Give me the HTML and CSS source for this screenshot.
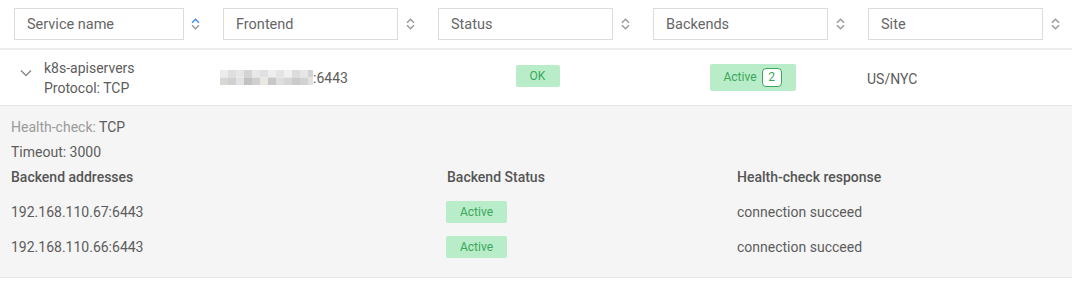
FILE: index.html
```html
<!DOCTYPE html>
<html lang="en">
<head>
    <meta charset="UTF-8">
    <title>Services</title>
    <link rel="stylesheet" href="styles.css">
</head>
<body>
    <div class="services">
        <!-- filter / sort header -->
        <div class="head-row">
            <div class="th first">
                <input class="filter" type="text" placeholder="Service name">
                <svg class="sort" width="9" height="12" viewBox="0 0 9 12"><path d="M1 4.8 L4.5 1.3 L8 4.8" class="up active"/><path d="M1 7.2 L4.5 10.7 L8 7.2"/></svg>
            </div>
            <div class="th">
                <input class="filter" type="text" placeholder="Frontend">
                <svg class="sort" width="9" height="12" viewBox="0 0 9 12"><path d="M1 4.8 L4.5 1.3 L8 4.8"/><path d="M1 7.2 L4.5 10.7 L8 7.2"/></svg>
            </div>
            <div class="th">
                <input class="filter" type="text" placeholder="Status">
                <svg class="sort" width="9" height="12" viewBox="0 0 9 12"><path d="M1 4.8 L4.5 1.3 L8 4.8"/><path d="M1 7.2 L4.5 10.7 L8 7.2"/></svg>
            </div>
            <div class="th">
                <input class="filter" type="text" placeholder="Backends">
                <svg class="sort" width="9" height="12" viewBox="0 0 9 12"><path d="M1 4.8 L4.5 1.3 L8 4.8"/><path d="M1 7.2 L4.5 10.7 L8 7.2"/></svg>
            </div>
            <div class="th">
                <input class="filter" type="text" placeholder="Site">
                <svg class="sort" width="9" height="12" viewBox="0 0 9 12"><path d="M1 4.8 L4.5 1.3 L8 4.8"/><path d="M1 7.2 L4.5 10.7 L8 7.2"/></svg>
            </div>
        </div>

        <!-- service row -->
        <div class="row">
            <div class="td name-cell">
                <svg class="chevron" width="12" height="8" viewBox="0 0 12 8"><path d="M1 1.5 L6 6.5 L11 1.5"/></svg>
                <div class="name">
                    <div>k8s-apiservers</div>
                    <div>Protocol: TCP</div>
                </div>
            </div>
            <div class="td frontend">
                <svg class="blur" width="93" height="15" viewBox="0 0 93 15">
                    <rect x="0" y="0" width="8" height="7.5" fill="#ececec"/>
                    <rect x="8" y="0" width="8" height="7.5" fill="#dedede"/>
                    <rect x="16" y="0" width="8" height="7.5" fill="#e6e6e6"/>
                    <rect x="24" y="0" width="8" height="7.5" fill="#d4d4d4"/>
                    <rect x="32" y="0" width="8" height="7.5" fill="#e8e8e8"/>
                    <rect x="40" y="0" width="8" height="7.5" fill="#e0e0e0"/>
                    <rect x="48" y="0" width="8" height="7.5" fill="#eeeeee"/>
                    <rect x="56" y="0" width="8" height="7.5" fill="#e4e4e4"/>
                    <rect x="64" y="0" width="8" height="7.5" fill="#f0f0f0"/>
                    <rect x="72" y="0" width="8" height="7.5" fill="#dcdcdc"/>
                    <rect x="80" y="0" width="8" height="7.5" fill="#e6e6e6"/>
                    <rect x="88" y="0" width="5" height="7.5" fill="#d2d2d2"/>
                    <rect x="0" y="7.5" width="8" height="7.5" fill="#dad6d2"/>
                    <rect x="8" y="7.5" width="8" height="7.5" fill="#d0d0d0"/>
                    <rect x="16" y="7.5" width="8" height="7.5" fill="#e2e2e2"/>
                    <rect x="24" y="7.5" width="8" height="7.5" fill="#c2c2c2"/>
                    <rect x="32" y="7.5" width="8" height="7.5" fill="#cfcfcf"/>
                    <rect x="40" y="7.5" width="8" height="7.5" fill="#ebe7e3"/>
                    <rect x="48" y="7.5" width="8" height="7.5" fill="#c8c8c8"/>
                    <rect x="56" y="7.5" width="8" height="7.5" fill="#dedede"/>
                    <rect x="64" y="7.5" width="8" height="7.5" fill="#d6d6d6"/>
                    <rect x="72" y="7.5" width="8" height="7.5" fill="#cbcbcb"/>
                    <rect x="80" y="7.5" width="8" height="7.5" fill="#d2d2d2"/>
                    <rect x="88" y="7.5" width="5" height="7.5" fill="#e2e2e2"/>
                </svg>
                <span>:6443</span>
            </div>
            <div class="td center">
                <span class="badge ok">OK</span>
            </div>
            <div class="td center">
                <span class="badge backends">Active <span class="count">2</span></span>
            </div>
            <div class="td site">US/NYC</div>
        </div>

        <!-- expanded details -->
        <div class="details">
            <div class="line"><span class="muted">Health-check:</span> TCP</div>
            <div class="line">Timeout: 3000</div>
            <div class="backend-grid">
                <div class="label">Backend addresses</div>
                <div class="label">Backend Status</div>
                <div class="label">Health-check response</div>

                <div class="cell">192.168.110.67:6443</div>
                <div class="cell"><span class="badge small">Active</span></div>
                <div class="cell">connection succeed</div>

                <div class="cell">192.168.110.66:6443</div>
                <div class="cell"><span class="badge small">Active</span></div>
                <div class="cell">connection succeed</div>
            </div>
        </div>
    </div>
</body>
</html>
```

FILE: styles.css
```css
body {
    margin: 0;
    padding: 0;
    background: white;
    font-family: Roboto, "Liberation Sans", sans-serif;
    font-size: 14px;
    color: #5c5c5c;
}
.head-row, .row {
    display: grid;
    grid-template-columns: 215px 215px 215px 215px 1fr;
}
.head-row {
    height: 48px;
    border-bottom: 2px solid #ececec;
}
.th {
    display: flex;
    align-items: center;
    gap: 8px;
    padding-left: 8px;
}
.th.first {
    padding-left: 14px;
    gap: 7px;
}
.filter {
    box-sizing: border-box;
    width: 175px;
    height: 32px;
    border: 1px solid #dcdcdc;
    border-radius: 0;
    padding: 0 12px;
    font-family: Roboto, "Liberation Sans", sans-serif;
    font-size: 14.5px;
    color: #666;
    outline: none;
}
.th.first .filter {
    width: 170px;
}
.filter::placeholder {
    color: #666;
}
.sort path {
    fill: none;
    stroke: #9a9a9a;
    stroke-width: 1.5;
}
.sort path.active {
    stroke: #4a8ee6;
}
.row {
    height: 55px;
    border-bottom: 1px solid #e6e6e6;
}
.td {
    display: flex;
    align-items: center;
    padding-left: 6px;
}
.td.center {
    justify-content: center;
    padding-left: 0;
}
.name-cell {
    padding-left: 20px;
    gap: 12px;
}
.chevron {
    align-self: flex-start;
    margin-top: 19px;
}
.chevron path {
    fill: none;
    stroke: #8a8a8a;
    stroke-width: 1.5;
}
.name {
    line-height: 20px;
}
.frontend {
    padding-left: 5px;
}
.blur {
    display: block;
}
.site {
    padding-left: 7px;
    margin-top: 2px;
}
.badge {
    display: inline-flex;
    align-items: center;
    justify-content: center;
    background: #b9ecc9;
    color: #3aa75a;
    font-size: 12px;
    border-radius: 2px;
}
.badge.ok {
    width: 44px;
    height: 22px;
    margin-top: -3px;
}
.badge.backends {
    width: 86px;
    height: 27px;
    gap: 5px;
    margin-top: -1px;
}
.count {
    display: inline-flex;
    align-items: center;
    justify-content: center;
    width: 18px;
    height: 17px;
    background: white;
    border: 1px solid #3aa75a;
    border-radius: 4px;
    color: #3aa75a;
}
.details {
    background: #f5f5f5;
    padding: 9px 11px 17px;
    border-bottom: 1px solid #e6e6e6;
}
.line {
    line-height: 25px;
}
.muted {
    color: #9a9a9a;
}
.backend-grid {
    display: grid;
    grid-template-columns: 436px 290px 1fr;
    grid-auto-rows: 35px;
    grid-template-rows: 25px;
}
.label {
    line-height: 25px;
    font-weight: 500;
    color: #555;
}
.cell {
    display: flex;
    align-items: center;
    margin-top: 4px;
    margin-bottom: -4px;
}
.badge.small {
    width: 61px;
    height: 22px;
    margin-left: -1px;
}
```
